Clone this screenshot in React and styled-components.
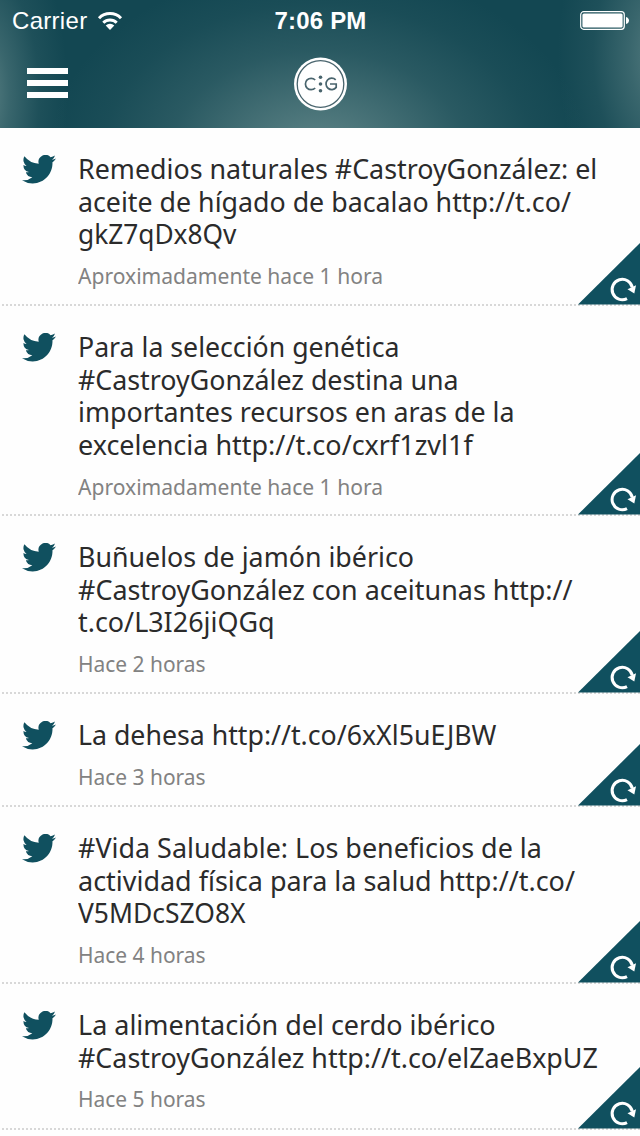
import React from "react";
import styled, { createGlobalStyle } from "styled-components";

const Global = createGlobalStyle`
  * { box-sizing: border-box; }
  body { margin: 0; background: #fff; overflow: hidden; }
`;
const Screen = styled.div`
  width: 640px; height: 1136px; overflow: hidden; background: #fefefe;
  font-family: "Noto Sans", sans-serif;
`;
const Header = styled.header`
  height: 128px; color: #fff; display: flex; flex-direction: column;
  background:
    radial-gradient(ellipse 90px 190px at -22px 95px, rgba(110,145,146,.85), rgba(110,145,146,.42) 35%, rgba(110,145,146,.12) 68%, rgba(110,145,146,0)),
    radial-gradient(ellipse 110px 190px at 668px 55px, rgba(110,145,146,.8), rgba(110,145,146,.42) 35%, rgba(110,145,146,.12) 68%, rgba(110,145,146,0)),
    radial-gradient(ellipse 270px 190px at 318px 155px, rgba(110,145,146,.85), rgba(110,145,146,.55) 28%, rgba(110,145,146,.25) 55%, rgba(110,145,146,.08) 80%, rgba(110,145,146,0)),
    #134752;
`;
const StatusBar = styled.div`
  height: 40px; display: grid; grid-template-columns: 1fr auto 1fr; align-items: center;
  padding: 1px 11px 0 12px; font: 24px/40px "Liberation Sans", sans-serif;
`;
const Carrier = styled.div`display: flex; align-items: center; gap: 10px;`;
const CarrierName = styled.span`letter-spacing: .3px;`;
const Clock = styled.div`font-weight: 700; font-size: 24px; letter-spacing: .2px;`;
const Battery = styled.svg`justify-self: end; display: block; margin-top: -1px;`;
const NavBar = styled.nav`
  height: 88px; display: grid; grid-template-columns: 1fr auto 1fr; align-items: center; padding: 0 27px;
`;
const Menu = styled.div`display: flex; flex-direction: column; gap: 6px; width: 41px; margin-top: -2px;`;
const MenuBar = styled.i`height: 6px; background: #fff;`;
const Logo = styled.svg`display: block;`;

const Tweet = styled.article`
  position: relative; display: flex; height: ${p => p.$height}px; padding: 24px 0 0 22px;
`;
const Bird = styled.svg`width: 34px; height: 29px; margin-top: 3px; flex: none;`;
const Body = styled.div`margin-left: 22px; white-space: nowrap;`;
const Line = styled.div`
  height: 32.67px; font-size: 28px; line-height: 32.67px; color: #2b2b2b;
`;
const Run = styled.span`display: inline-block; transform-origin: 0 50%; transform: scaleX(${p => p.$fit || 1});`;
const Age = styled.div`margin-top: 9px; font-size: 22px; line-height: 32px; color: #828282;`;
const Divider = styled.svg`position: absolute; left: 0; bottom: 0; width: 640px; height: 2px;`;
const Corner = styled.svg`position: absolute; right: 0; bottom: 1px; width: 62px; height: 62px;`;

const tweets = [
  { h: 178, age: ["Aproximadamente hace 1 hora", .957], lines: [["Remedios naturales #CastroyGonzález: el", .958], ["aceite de hígado de bacalao http://t.co/", .956], ["gkZ7qDx8Qv", .938]] },
  { h: 210, age: ["Aproximadamente hace 1 hora", .957], lines: [["Para la selección genética", .953], ["#CastroyGonzález destina una", .957], ["importantes recursos en aras de la", .958], ["excelencia http://t.co/cxrf1zvl1f", .963]] },
  { h: 178, age: ["Hace 2 horas", .952], lines: [["Buñuelos de jamón ibérico", .957], ["#CastroyGonzález con aceitunas http://", .961], ["t.co/L3I26jiQGq", .961]] },
  { h: 113, age: ["Hace 3 horas", .952], lines: [["La dehesa http://t.co/6xXl5uEJBW", .954]] },
  { h: 177, age: ["Hace 4 horas", .952], lines: [["#Vida Saludable: Los beneficios de la", .961], ["actividad física para la salud http://t.co/", .963], ["V5MDcSZO8X", .944]] },
  { h: 146, age: ["Hace 5 horas", .952], lines: [["La alimentación del cerdo ibérico", .963], ["#CastroyGonzález http://t.co/elZaeBxpUZ", .959]] },
];

export default function App() {
  return (
    <Screen>
      <Global />
      <Header>
        <StatusBar>
          <Carrier>
            <CarrierName>Carrier</CarrierName>
            <svg width="26" height="20" viewBox="0 0 26 20" fill="none" stroke="#fff" strokeWidth="3">
              <path d="M2 7.200a15.500 15.500 0 0 1 22 0M6.300 11.700a9.500 9.500 0 0 1 13.400 0" />
              <path d="M13 19l-4.300-4.500a6 6 0 0 1 8.600 0z" fill="#fff" stroke="none" />
            </svg>
          </Carrier>
          <Clock>7:06 PM</Clock>
          <Battery width="49" height="19" viewBox="0 0 49 19">
            <rect x=".7" y=".7" width="43.6" height="17.6" rx="3" fill="none" stroke="#fff" strokeWidth="1.2" />
            <rect x="2.4" y="2.4" width="40.2" height="14.2" rx="1.5" fill="#fff" />
            <path d="M46 6c4 1 4 6 0 7z" fill="#fff" />
          </Battery>
        </StatusBar>
        <NavBar>
          <Menu><MenuBar /><MenuBar /><MenuBar /></Menu>
          <Logo width="54" height="54" viewBox="0 0 54 54">
            <circle cx="27.500" cy="27" r="26.500" fill="#fff" />
            <g fill="none" stroke="#49646d" strokeWidth="1.7">
              <circle cx="27.500" cy="27" r="23.300" strokeWidth="1.3" />
              <path d="M22.200 23a5.700 5.700 0 1 0 0 8M42.700 22.800a5.700 5.700 0 1 0 .5 7.600V27H37" />
            </g>
            <g fill="#49646d"><circle cx="27.500" cy="20.300" r="1.8" /><circle cx="27.500" cy="27" r="1.8" /><circle cx="27.500" cy="33.700" r="1.8" /></g>
          </Logo>
        </NavBar>
      </Header>
      {tweets.map((t, i) => (
        <Tweet key={i} $height={t.h}>
          <Bird viewBox="0 0 24 20" preserveAspectRatio="none">
            <path fill="#10505f" d="M24 2.400a9.600 9.600 0 0 1-2.800.800A4.900 4.900 0 0 0 23.300.400a9.800 9.800 0 0 1-3.100 1.200A4.900 4.900 0 0 0 11.800 6.100 14 14 0 0 1 1.700.900 4.900 4.900 0 0 0 3.200 7.500 4.800 4.800 0 0 1 1 6.900a4.900 4.900 0 0 0 3.900 4.900 4.900 4.900 0 0 1-2.200.100 4.900 4.900 0 0 0 4.600 3.400A9.900 9.900 0 0 1 0 17.400 14 14 0 0 0 7.500 19.600c9.100 0 14.400-7.700 14-14.600A10 10 0 0 0 24 2.400z" />
          </Bird>
          <Body>
            {t.lines.map(([text, fit]) => <Line key={text}><Run $fit={fit}>{text}</Run></Line>)}
            <Age><Run $fit={t.age[1]}>{t.age[0]}</Run></Age>
          </Body>
          <Divider><line x1="2" y1="1" x2="640" y2="1" stroke="#cbcbcb" strokeWidth="1.700" strokeDasharray="2 2" /></Divider>
          <Corner viewBox="0 0 62 62">
            <path d="M0 61.500L62 0V61.500z" fill="#10505f" />
            <path d="M49 55.600A10.200 10.200 0 1 1 54.300 44.500" fill="none" stroke="#fff" strokeWidth="3" />
            <path d="M49.500 46.300L58 42.200 56.300 50.500z" fill="#fff" />
          </Corner>
        </Tweet>
      ))}
    </Screen>
  );
}
